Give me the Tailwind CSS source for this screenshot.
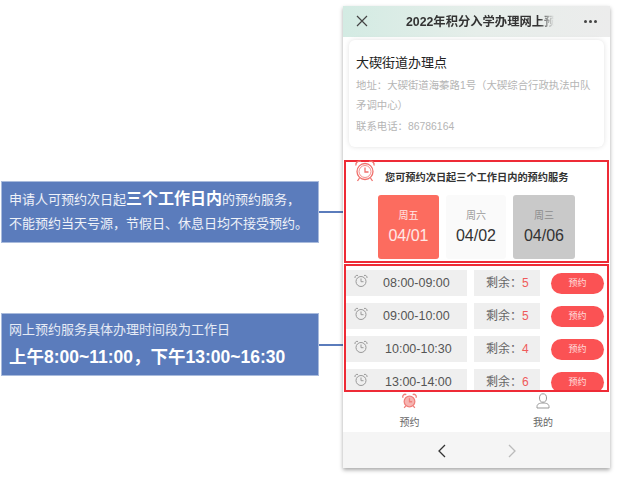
<!DOCTYPE html>
<html lang="en">
<head>
    <meta charset="UTF-8">
    <title>预约</title>
    <script src="https://cdn.jsdelivr.net/npm/@tailwindcss/browser@4"></script>
</head>
<body class="bg-white w-[618px] h-[480px] overflow-hidden font-['Liberation_Sans','Noto_Sans_CJK_SC',sans-serif]">
<div class="flex h-[480px]">
    <!-- Left callouts -->
    <div class="w-[343px] pl-[1px] pt-[181px] shrink-0">
        <div class="flex items-center">
            <div class="w-[319px] h-[62px] bg-[#5b7cbc] border border-[#a9bbdc] text-white/90 text-[13px] pl-[7px] pt-[5px] leading-[24px]">
                <p class="whitespace-nowrap">申请人可预约次日起<b class="text-[16px] text-white">三个工作日内</b>的预约服务，</p>
                <p class="whitespace-nowrap">不能预约当天号源，节假日、休息日均不接受预约。</p>
            </div>
            <div class="w-[24px] h-[2px] bg-[#5b7cbc]"></div>
        </div>
        <div class="flex items-center mt-[70px]">
            <div class="w-[319px] h-[63px] bg-[#5b7cbc] border border-[#a9bbdc] text-white pl-[7px] pt-[4px]">
                <p class="text-[13px] text-white/85 leading-[24px] whitespace-nowrap">网上预约服务具体办理时间段为工作日</p>
                <p class="text-[17.5px] font-bold leading-[28px] mt-[1px] whitespace-nowrap">上午8:00~11:00，下午13:00~16:30</p>
            </div>
            <div class="w-[24px] h-[2px] bg-[#5b7cbc]"></div>
        </div>
    </div>

    <!-- Phone -->
    <div class="w-[267px] h-[462px] mt-[6px] flex flex-col bg-white shadow-[0_2px_4px_rgba(0,0,0,0.35)] shrink-0">
        <div class="h-[31px] flex items-center pl-[13px] pr-[13px] bg-gradient-to-r from-[#d3ebe3] via-[#e6eeea] to-[#ececec]">
            <svg width="12" height="12" viewBox="0 0 12 12" fill="none" stroke="#444" stroke-width="1.2"><path d="M1 1l10 10M11 1L1 11"/></svg>
            <div class="ml-[38px] mt-[1px] w-[148px] text-[12.3px] font-semibold text-[#333] whitespace-nowrap overflow-hidden [mask-image:linear-gradient(to_right,black_90%,transparent)]">2022年积分入学办理网上预约</div>
            <div class="ml-auto flex gap-[2px]">
                <span class="w-[3px] h-[3px] rounded-full bg-[#444]"></span>
                <span class="w-[3px] h-[3px] rounded-full bg-[#444]"></span>
                <span class="w-[3px] h-[3px] rounded-full bg-[#444]"></span>
            </div>
        </div>

        <div class="mx-[6px] mt-[3px] h-[107px] rounded-[6px] bg-white shadow-[0_0_5px_rgba(0,0,0,0.12)] px-[7px] pt-[12px]">
            <h1 class="text-[13px] text-[#222] leading-[22px]">大碶街道办理点</h1>
            <p class="text-[10.4px] text-[#b5b5b5] leading-[20.5px] mt-[2px]">地址：大碶街道海蓁路1号（大碶综合行政执法中队矛调中心）</p>
            <p class="text-[10.4px] text-[#b5b5b5] leading-[20.5px]">联系电话：86786164</p>
        </div>

        <!-- Date picker -->
        <div class="mt-[13px] mx-[1px] h-[104px] border-2 border-[#ee2b36] px-[8px] relative">
            <div class="flex items-center h-[22px] -mt-[2px]">
                <svg width="22" height="24" viewBox="0 0 22 24" fill="none" stroke="#f0706c" stroke-width="1.3"><circle cx="11" cy="12.5" r="8"/><circle cx="11" cy="12.5" r="6" stroke-width="0.8"/><path d="M11 8.5v4.500h3.500M2 6.500a3.500 3.500 0 0 1 5-4M20 6.500a3.500 3.500 0 0 0-5-4M5.500 19l-2 3M16.500 19l2 3"/></svg>
                <span class="ml-[9px] mt-[14px] text-[10.200px] font-bold text-[#333] whitespace-nowrap">您可预约次日起三个工作日内的预约服务</span>
            </div>
            <div class="flex ml-[24px] mt-[13px] gap-[7px]">
                <div class="w-[61px] h-[64px] rounded-[3px] bg-[#fc6c5f] text-white/85 flex flex-col items-center pt-[14px]">
                    <span class="text-[10px] leading-[14px]">周五</span>
                    <span class="text-[16px] leading-[20px] mt-[3px]">04/01</span>
                </div>
                <div class="w-[60px] h-[64px] rounded-[3px] bg-[#fafafa] flex flex-col items-center pt-[14px]">
                    <span class="text-[10px] leading-[14px] text-[#999]">周六</span>
                    <span class="text-[16px] leading-[20px] mt-[3px] text-[#333]">04/02</span>
                </div>
                <div class="w-[62px] h-[64px] rounded-[3px] bg-[#c9c9c9] flex flex-col items-center pt-[14px]">
                    <span class="text-[10px] leading-[14px] text-[#8c8c8c]">周三</span>
                    <span class="text-[16px] leading-[20px] mt-[3px] text-[#333]">04/06</span>
                </div>
            </div>
        </div>

        <!-- Time slots -->
        <div id="slots" class="mt-[1px] mx-[1px] h-[128px] border-2 border-[#ee2b36] overflow-hidden pt-[4px] flex flex-col gap-[7px]">
            <div class="flex shrink-0 items-center h-[26px]">
                <div class="w-[121px] h-[26px] bg-[#efefef] flex items-center pl-[8px]">
                    <svg class="-mt-[4px]" width="14" height="14" viewBox="0 0 14 14" fill="none" stroke="#999" stroke-width="1"><circle cx="7" cy="7.500" r="5"/><path d="M7 4.500v3.200h2.500M1 4a2.200 2.200 0 0 1 3-2.500M13 4a2.200 2.200 0 0 0-3-2.500"/></svg>
                    <span class="ml-[15px] text-[12.500px] text-[#555]">08:00-09:00</span>
                </div>
                <div class="ml-[7px] w-[66px] h-[26px] bg-[#efefef] flex items-center pl-[12px] text-[12px] text-[#666] whitespace-nowrap">剩余：<span class="text-[#ef5a5a]">5</span></div>
                <div class="ml-[11px] w-[53px] h-[21px] rounded-full bg-[#fb5254] text-[9px] text-white/80 flex items-center justify-center">预约</div>
            </div>
            <div class="flex shrink-0 items-center h-[26px]">
                <div class="w-[121px] h-[26px] bg-[#efefef] flex items-center pl-[8px]">
                    <svg class="-mt-[4px]" width="14" height="14" viewBox="0 0 14 14" fill="none" stroke="#999" stroke-width="1"><circle cx="7" cy="7.500" r="5"/><path d="M7 4.500v3.200h2.500M1 4a2.200 2.200 0 0 1 3-2.500M13 4a2.200 2.200 0 0 0-3-2.500"/></svg>
                    <span class="ml-[15px] text-[12.500px] text-[#555]">09:00-10:00</span>
                </div>
                <div class="ml-[7px] w-[66px] h-[26px] bg-[#efefef] flex items-center pl-[12px] text-[12px] text-[#666] whitespace-nowrap">剩余：<span class="text-[#ef5a5a]">5</span></div>
                <div class="ml-[11px] w-[53px] h-[21px] rounded-full bg-[#fb5254] text-[9px] text-white/80 flex items-center justify-center">预约</div>
            </div>
            <div class="flex shrink-0 items-center h-[26px]">
                <div class="w-[121px] h-[26px] bg-[#efefef] flex items-center pl-[8px]">
                    <svg class="-mt-[4px]" width="14" height="14" viewBox="0 0 14 14" fill="none" stroke="#999" stroke-width="1"><circle cx="7" cy="7.500" r="5"/><path d="M7 4.500v3.200h2.500M1 4a2.200 2.200 0 0 1 3-2.500M13 4a2.200 2.200 0 0 0-3-2.500"/></svg>
                    <span class="ml-[17px] text-[12.500px] text-[#555]">10:00-10:30</span>
                </div>
                <div class="ml-[7px] w-[66px] h-[26px] bg-[#efefef] flex items-center pl-[12px] text-[12px] text-[#666] whitespace-nowrap">剩余：<span class="text-[#ef5a5a]">4</span></div>
                <div class="ml-[11px] w-[53px] h-[21px] rounded-full bg-[#fb5254] text-[9px] text-white/80 flex items-center justify-center">预约</div>
            </div>
            <div class="flex shrink-0 items-center h-[26px]">
                <div class="w-[121px] h-[26px] bg-[#efefef] flex items-center pl-[8px]">
                    <svg class="-mt-[4px]" width="14" height="14" viewBox="0 0 14 14" fill="none" stroke="#999" stroke-width="1"><circle cx="7" cy="7.500" r="5"/><path d="M7 4.500v3.200h2.500M1 4a2.200 2.200 0 0 1 3-2.500M13 4a2.200 2.200 0 0 0-3-2.500"/></svg>
                    <span class="ml-[17px] text-[12.500px] text-[#555]">13:00-14:00</span>
                </div>
                <div class="ml-[7px] w-[66px] h-[26px] bg-[#efefef] flex items-center pl-[12px] text-[12px] text-[#666] whitespace-nowrap">剩余：<span class="text-[#ef5a5a]">6</span></div>
                <div class="ml-[11px] w-[53px] h-[21px] rounded-full bg-[#fb5254] text-[9px] text-white/80 flex items-center justify-center">预约</div>
            </div>
        </div>

        <!-- Tab bar -->
        <div class="h-[40px] flex">
            <div class="w-[133px] flex flex-col items-center">
                <svg class="mt-[1px]" width="15" height="16" viewBox="0 0 14 15" fill="none" stroke="#f0807c" stroke-width="1.200"><circle cx="7" cy="8" r="5" fill="#f6b5b2"/><path d="M7 5v3.200h2.500M1 4.500a2.200 2.200 0 0 1 3-3M13 4.500a2.200 2.200 0 0 0-3-3M3.500 12l-1.500 2M10.500 12l1.500 2"/></svg>
                <span class="mt-[7px] text-[10px] leading-[14px] text-[#666]">预约</span>
            </div>
            <div class="w-[134px] flex flex-col items-center">
                <svg class="mt-[1px]" width="14" height="16" viewBox="0 0 14 16" fill="none" stroke="#999" stroke-width="1"><ellipse cx="7" cy="5" rx="3.500" ry="4.200"/><path d="M1 15v-1.500C1 11 3.500 10 7 10s6 1 6 3.500V15z"/></svg>
                <span class="mt-[7px] text-[10px] leading-[14px] text-[#666]">我的</span>
            </div>
        </div>

        <!-- Bottom nav -->
        <div class="h-[36px] bg-[#f5f5f5] flex items-center justify-center gap-[62px] pt-[1px]">
            <svg width="9" height="14" viewBox="0 0 9 14" fill="none" stroke="#333" stroke-width="1.300"><path d="M8 1L2 7l6 6"/></svg>
            <svg width="9" height="14" viewBox="0 0 9 14" fill="none" stroke="#bbb" stroke-width="1.300"><path d="M1 1l6 6-6 6"/></svg>
        </div>
    </div>
</div>
</body>
</html>
